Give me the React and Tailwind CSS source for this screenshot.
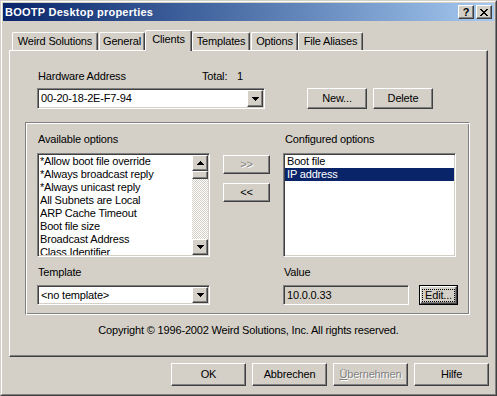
import React from "react";

const raised = "border border-t-white border-l-white border-r-[#404040] border-b-[#404040] shadow-[inset_-1px_-1px_0_#808080]";
const sunken = "border border-t-[#808080] border-l-[#808080] border-r-white border-b-white shadow-[inset_1px_1px_0_#404040,inset_-1px_-1px_0_#d4d0c8]";
const disabledText = "text-[#808080] [text-shadow:1px_1px_0_#fff]";

function Arrow({ up }) {
    const rows = up ? [1, 3, 5, 7] : [7, 5, 3, 1];
    return <svg width="7" height="4" shapeRendering="crispEdges">
        {rows.map((w, i) => <rect key={i} x={(7 - w) / 2} y={i} width={w} height="1" fill="#000"/>)}
    </svg>
}

function CloseGlyph() {
    const px = [[0, 0, 2], [6, 0, 2], [1, 1, 2], [5, 1, 2], [2, 2, 4], [3, 3, 2], [2, 4, 4], [1, 5, 2], [5, 5, 2], [0, 6, 2], [6, 6, 2]];
    return <svg width="8" height="7" shapeRendering="crispEdges">
        {px.map(([x, y, w], i) => <rect key={i} x={x} y={y} width={w} height="1" fill="#000"/>)}
    </svg>
}

function Combo({ value, className }) {
    return <div className={`${className} bg-white p-px flex ${sunken}`}>
        <div className="flex-1 flex items-center pl-[2px] leading-[13px]">{value}</div>
        <div className={`w-[16px] h-full bg-[#d4d0c8] flex items-center justify-center ${raised}`}>
            <Arrow/>
        </div>
    </div>
}

function Button({ className, children, disabled }) {
    return <div className={`${className} bg-[#d4d0c8] flex items-center justify-center leading-[13px] ${raised}`}>
        <span className={disabled ? disabledText : ""}>{children}</span>
    </div>
}

const available = [
    "*Allow boot file override",
    "*Always broadcast reply",
    "*Always unicast reply",
    "All Subnets are Local",
    "ARP Cache Timeout",
    "Boot file size",
    "Broadcast Address",
    "Class Identifier",
];

const tabs = [
    { name: "Weird Solutions", cls: "ml-[1px] w-[86px]" },
    { name: "General", cls: "ml-[1px] w-[46px]" },
    { name: "Clients", cls: "w-[47px]", active: true },
    { name: "Templates", cls: "w-[58px]" },
    { name: "Options", cls: "ml-[1px] w-[47px]" },
    { name: "File Aliases", cls: "w-[65px]" },
];

export default function App() {
    return <div
        className="w-[497px] h-[396px] bg-[#d4d0c8] border border-t-[#d4d0c8] border-l-[#d4d0c8] border-r-[#404040] border-b-[#404040] font-['Liberation_Sans',Arial,sans-serif] text-[11px] tracking-[-0.17px] text-black select-none">
        <div className="h-full border border-t-white border-l-white border-r-[#808080] border-b-[#808080] p-px flex flex-col">

            {/* title bar */}
            <div className="h-[18px] bg-linear-to-r from-[#0a246a] to-[#a6caf0] flex items-center pl-[2px] pr-[2px]">
                <span className="flex-1 text-white font-bold text-[11px] tracking-[0.25px] leading-[13px]">BOOTP Desktop properties</span>
                <div className={`w-[16px] h-[14px] bg-[#d4d0c8] flex items-center justify-center font-bold text-[11px] leading-[11px] ${raised}`}>?</div>
                <div className={`ml-[2px] w-[16px] h-[14px] bg-[#d4d0c8] flex items-center justify-center ${raised}`}>
                    <CloseGlyph/>
                </div>
            </div>

            {/* tabs */}
            <div className="mt-[9px] h-[20px] flex items-end pl-[8px]">
                {tabs.map(t => t.active ?
                    <div key={t.name}
                         className={`${t.cls} relative z-10 h-[21px] -mb-px bg-[#d4d0c8] border-t border-l border-r border-t-white border-l-white border-r-[#404040] rounded-t-[2px] shadow-[inset_-1px_0_0_#808080] flex justify-center pt-[2px] leading-[13px]`}>
                        {t.name}
                    </div> :
                    <div key={t.name}
                         className={`${t.cls} h-[18px] bg-[#d4d0c8] border-t border-l border-r border-t-white border-l-white border-r-[#404040] rounded-t-[2px] shadow-[inset_-1px_0_0_#808080] flex justify-center pt-[2px] leading-[13px]`}>
                        {t.name}
                    </div>
                )}
            </div>

            {/* tab panel */}
            <div className={`ml-[6px] w-[479px] h-[307px] flex flex-col ${raised}`}>
                <div className="mt-[19px] pl-[28px] flex leading-[13px]">
                    <span className="w-[164px]">Hardware Address</span>
                    <span className="w-[35px]">Total:</span>
                    <span>1</span>
                </div>
                <div className="mt-[5px] pl-[27px] flex">
                    <Combo value="00-20-18-2E-F7-94" className="w-[228px] h-[21px]"/>
                    <Button className="ml-[42px] w-[60px] h-[21px]">New...</Button>
                    <Button className="ml-[6px] w-[60px] h-[21px]">Delete</Button>
                </div>

                {/* group box */}
                <div className="mt-[13px] ml-[15px] w-[445px] h-[193px] border border-t-[#808080] border-l-[#808080] border-r-white border-b-white shadow-[inset_1px_1px_0_#fff,inset_-1px_-1px_0_#808080] pl-[11px] flex flex-col">
                    <div className="mt-[10px] flex leading-[13px]">
                        <span className="ml-[1px] w-[245px]">Available options</span>
                        <span className="ml-[2px]">Configured options</span>
                    </div>
                    <div className="mt-[7px] flex">
                        <div className={`w-[173px] h-[104px] bg-white p-px flex ${sunken}`}>
                            <div className="flex-1 overflow-hidden pl-[1px] leading-[13px]">
                                {available.map(o => <div key={o} className="h-[13px] whitespace-nowrap">{o}</div>)}
                            </div>
                            <div className="w-[16px] h-full flex flex-col">
                                <div className={`h-[16px] bg-[#d4d0c8] flex items-center justify-center ${raised}`}><Arrow up/></div>
                                <div className={`h-[8px] bg-[#d4d0c8] ${raised}`}/>
                                <div className="flex-1 bg-[repeating-conic-gradient(#d4d0c8_0_25%,#fff_0_50%)] bg-[length:2px_2px]"/>
                                <div className={`h-[16px] bg-[#d4d0c8] flex items-center justify-center ${raised}`}><Arrow/></div>
                            </div>
                        </div>
                        <div className="ml-[13px] w-[47px] flex flex-col">
                            <Button className="mt-[2px] h-[19px]" disabled>&gt;&gt;</Button>
                            <Button className="mt-[9px] h-[19px]">&lt;&lt;</Button>
                        </div>
                        <div className={`ml-[13px] w-[173px] h-[104px] bg-white p-px leading-[13px] ${sunken}`}>
                            <div className="h-[13px] pl-[2px]">Boot file</div>
                            <div className="h-[13px] pl-[2px] bg-[#0a246a] text-white">IP address</div>
                        </div>
                    </div>
                    <div className="mt-[9px] flex leading-[13px]">
                        <span className="ml-[1px] w-[245px]">Template</span>
                        <span className="ml-[1px]">Value</span>
                    </div>
                    <div className="mt-[6px] flex">
                        <Combo value="<no template>" className="w-[173px] h-[20px]"/>
                        <div className={`ml-[73px] w-[126px] h-[20px] bg-[#d4d0c8] p-px pl-[3px] flex items-center leading-[13px] ${sunken}`}>10.0.0.33</div>
                        <div className="ml-[10px] w-[39px] h-[20px] border border-black">
                            <div className={`h-full bg-[#d4d0c8] flex items-center justify-center p-[2px] ${raised}`}>
                                <span className="border border-dotted border-black px-[2px] leading-[11px]">Edit...</span>
                            </div>
                        </div>
                    </div>
                </div>

                <div className="mt-[9px] text-center leading-[13px]">Copyright © 1996-2002 Weird Solutions, Inc. All rights reserved.</div>
            </div>

            {/* dialog buttons */}
            <div className="mt-[6px] flex justify-end pr-[5px]">
                <Button className="w-[75px] h-[23px]">OK</Button>
                <Button className="ml-[6px] w-[75px] h-[23px]">Abbrechen</Button>
                <Button className="ml-[6px] w-[75px] h-[23px]" disabled><span className="underline">Ü</span>bernehmen</Button>
                <Button className="ml-[6px] w-[75px] h-[23px]">Hilfe</Button>
            </div>
        </div>
    </div>
}
